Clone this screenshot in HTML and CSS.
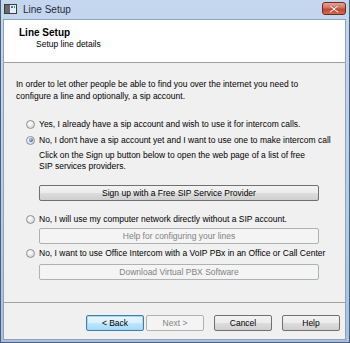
FILE: index.html
```html
<!DOCTYPE html>
<html lang="en">
<head>
  <meta charset="UTF-8" />
  <title>Line Setup</title>
  <link rel="stylesheet" href="styles.css">
</head>
<body>
  <div class="window">
    <div class="titlebar">
      <svg class="app-icon" width="13" height="10" viewBox="0 0 13 10">
        <rect x="0" y="0" width="13" height="10" fill="#3b3b3b"/>
        <rect x="1" y="1" width="11" height="8" fill="#e8eef5"/>
        <rect x="1" y="1" width="5" height="8" fill="#6a6a6a"/>
        <rect x="7" y="2" width="2" height="2" fill="#2f7fd8"/>
        <rect x="10" y="2" width="1" height="2" fill="#2f7fd8"/>
      </svg>
      <span class="title">Line Setup</span>
      <div class="close-btn">
        <svg width="10" height="8" viewBox="0 0 10 8">
          <path d="M1 0 L5 3 L9 0 L10 1 L6 4 L10 7 L9 8 L5 5 L1 8 L0 7 L4 4 L0 1 Z" fill="#ffffff" stroke="#7a2a22" stroke-width="0.4"/>
        </svg>
      </div>
    </div>
    <div class="frame">
      <div class="header">
        <div class="header-title">Line Setup</div>
        <div class="header-sub">Setup line details</div>
      </div>
      <div class="content">
        <p class="intro-text">In order to let other people be able to find you over the internet you need to configure a line and optionally, a sip account.</p>
        <div class="options">
          <label class="option"><span class="radio"></span><span class="option-text">Yes, I already have a sip account and wish to use it for intercom calls.</span></label>
          <label class="option second"><span class="radio checked"></span><span class="option-text">No, I don't have a sip account yet and I want to use one to make intercom call</span></label>
          <p class="option-note">Click on the Sign up button below to open the web page of a list of free SIP services providers.</p>
          <button class="btn wide signup">Sign up with a Free SIP Service Provider</button>
          <label class="option third"><span class="radio"></span><span class="option-text">No, I will use my computer network directly without a SIP account.</span></label>
          <button class="btn wide help-lines" disabled>Help for configuring your lines</button>
          <label class="option fourth"><span class="radio"></span><span class="option-text">No, I want to use Office Intercom with a VoIP PBx in an Office or Call Center</span></label>
          <button class="btn wide download" disabled>Download Virtual PBX Software</button>
        </div>
      </div>
      <div class="footer">
        <button class="btn default">&lt; Back</button>
        <button class="btn" disabled>Next &gt;</button>
        <button class="btn cancel">Cancel</button>
        <button class="btn">Help</button>
      </div>
    </div>
  </div>
</body>
</html>
```

FILE: styles.css
```css
body {
  margin: 0;
  font-family: 'Liberation Sans', Arial, sans-serif;
  font-size: 8.5px;
  color: #000000;
  background: #ffffff;
}
.window {
  width: 350px;
  height: 343px;
  box-sizing: border-box;
  display: flex;
  flex-direction: column;
  background: linear-gradient(#c5d7ee, #b7cce6 60%, #a9c1de);
  border: 1px solid #4a5f78;
  border-top: none;
}
.titlebar {
  height: 19px;
  display: flex;
  align-items: center;
  padding-left: 3px;
  padding-right: 3px;
  flex-shrink: 0;
}
.app-icon {
  margin-right: 6px;
  margin-top: -2px;
}
.title {
  font-size: 10px;
  color: #1e2b3a;
  flex: 1;
}
.close-btn {
  width: 22px;
  height: 11px;
  border: 1px solid #6d2a23;
  border-radius: 3px;
  background: linear-gradient(#e7a496, #d4705f 45%, #c24532 55%, #d46a4e);
  display: flex;
  align-items: center;
  justify-content: center;
  margin-top: -2px;
}
.frame {
  flex: 1;
  display: flex;
  flex-direction: column;
  margin: 0 3px 2px 2px;
  background: #f0f0f0;
  border: 1px solid #8da2bd;
}
.header {
  background: #ffffff;
  height: 43px;
  box-sizing: border-box;
  padding: 7px 0 0 15px;
  border-bottom: 1px solid #a0a0a0;
}
.header-title {
  font-weight: bold;
  font-size: 10px;
  line-height: 12px;
}
.header-sub {
  padding-left: 17px;
  line-height: 11px;
}
.content {
  flex: 1;
  padding: 15px 0 0 12px;
  border-bottom: 1px solid #a0a0a0;
}
.intro-text {
  margin: 0;
  width: 300px;
  line-height: 12px;
}
.options {
  display: flex;
  flex-direction: column;
  margin-top: 16px;
  padding-left: 10px;
}
.option {
  display: flex;
  align-items: center;
  height: 12px;
  white-space: nowrap;
}
.option.second {
  margin-top: 4px;
}
.option.third {
  margin-top: 12px;
}
.option.fourth {
  margin-top: 3px;
}
.radio {
  width: 7px;
  height: 7px;
  flex-shrink: 0;
  border: 1px solid #8f8f8f;
  border-radius: 50%;
  background: radial-gradient(circle at 40% 35%, #ffffff, #e1e1e1 60%, #cfcfcf);
  margin-right: 4px;
  display: flex;
  align-items: center;
  justify-content: center;
}
.radio.checked::after {
  content: "";
  width: 4px;
  height: 4px;
  border-radius: 50%;
  background: radial-gradient(circle at 40% 35%, #9fd3ff, #2b71c4 70%, #1a4f96);
}
.option-note {
  margin: 4px 0 0 13px;
  width: 272px;
  line-height: 11px;
}
.btn {
  font-family: inherit;
  font-size: 8.5px;
  height: 16px;
  width: 58px;
  padding: 0;
  border: 1px solid #707070;
  border-radius: 2px;
  background: linear-gradient(#f3f3f3, #ebebeb 50%, #dddddd 51%, #cfcfcf);
  color: #000000;
}
.btn:disabled {
  border-color: #adb2b5;
  background: #f4f4f4;
  color: #838383;
}
.btn.wide {
  width: 280px;
  margin-left: 13px;
}
.signup {
  margin-top: 13px;
}
.help-lines {
  margin-top: 3px;
}
.download {
  margin-top: 5px;
}
.btn.default {
  border-color: #3c7fb1;
  box-shadow: inset 0 0 0 1px #a7d6f5;
  background: linear-gradient(#eaf6fd, #d9f0fc 50%, #bee6fd 51%, #a7d9f5);
}
.footer {
  height: 36px;
  box-sizing: border-box;
  display: flex;
  align-items: flex-start;
  padding: 12px 0 0 82px;
  gap: 2px;
}
.footer .cancel {
  margin-left: 8px;
}
.footer .cancel + .btn {
  margin-left: 8px;
}
```
